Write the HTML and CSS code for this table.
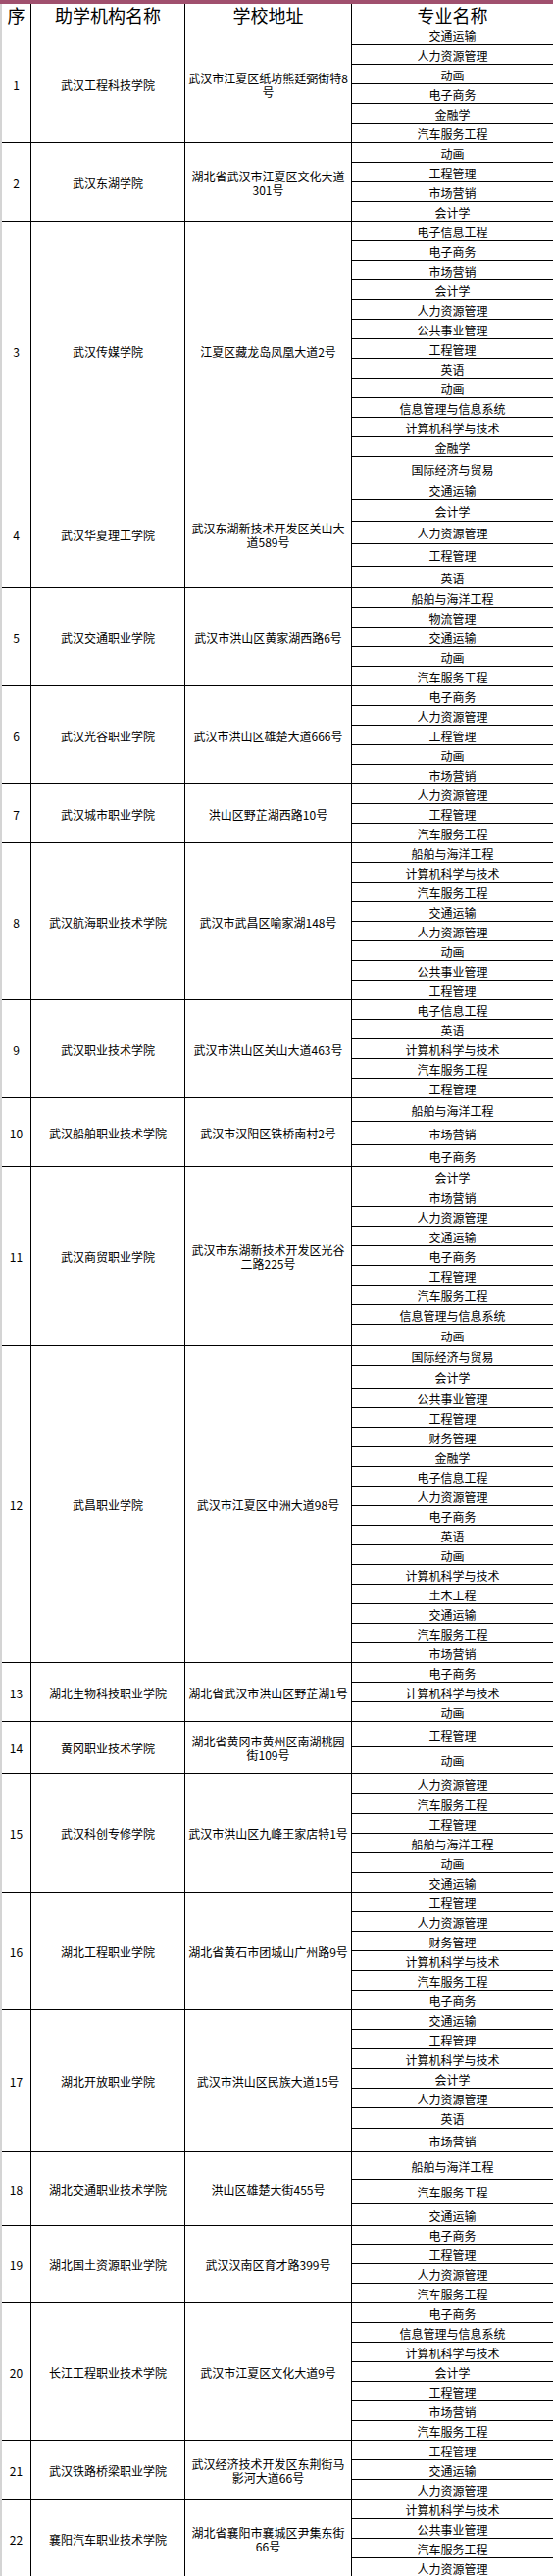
FILE: index.html
```html
<!DOCTYPE html>
<html lang="zh-CN">
<head>
<meta charset="utf-8">
<title>助学机构专业一览</title>
<link rel="stylesheet" href="styles.css">
</head>
<body>
<div class="band"></div>
<table class="sheet">
<thead>
<tr class="hd"><th class="c-seq">序</th><th class="c-name">助学机构名称</th><th class="c-addr">学校地址</th><th class="c-spec">专业名称</th></tr>
</thead>
<tbody>
<tr><td class="c-seq" rowspan="6">1</td><td class="c-name" rowspan="6">武汉工程科技学院</td><td class="c-addr" rowspan="6">武汉市江夏区纸坊熊廷弼街特8号</td><td class="c-spec">交通运输</td></tr>
<tr><td class="c-spec">人力资源管理</td></tr>
<tr><td class="c-spec">动画</td></tr>
<tr><td class="c-spec">电子商务</td></tr>
<tr><td class="c-spec">金融学</td></tr>
<tr><td class="c-spec">汽车服务工程</td></tr>

<tr><td class="c-seq" rowspan="4">2</td><td class="c-name" rowspan="4">武汉东湖学院</td><td class="c-addr" rowspan="4">湖北省武汉市江夏区文化大道301号</td><td class="c-spec">动画</td></tr>
<tr><td class="c-spec">工程管理</td></tr>
<tr><td class="c-spec">市场营销</td></tr>
<tr><td class="c-spec">会计学</td></tr>

<tr><td class="c-seq" rowspan="13">3</td><td class="c-name" rowspan="13">武汉传媒学院</td><td class="c-addr" rowspan="13">江夏区藏龙岛凤凰大道2号</td><td class="c-spec">电子信息工程</td></tr>
<tr><td class="c-spec">电子商务</td></tr>
<tr><td class="c-spec">市场营销</td></tr>
<tr><td class="c-spec">会计学</td></tr>
<tr><td class="c-spec">人力资源管理</td></tr>
<tr><td class="c-spec">公共事业管理</td></tr>
<tr><td class="c-spec">工程管理</td></tr>
<tr><td class="c-spec">英语</td></tr>
<tr><td class="c-spec">动画</td></tr>
<tr><td class="c-spec">信息管理与信息系统</td></tr>
<tr><td class="c-spec">计算机科学与技术</td></tr>
<tr><td class="c-spec">金融学</td></tr>
<tr class="h24"><td class="c-spec">国际经济与贸易</td></tr>

<tr><td class="c-seq" rowspan="5">4</td><td class="c-name" rowspan="5">武汉华夏理工学院</td><td class="c-addr" rowspan="5">武汉东湖新技术开发区关山大道589号</td><td class="c-spec">交通运输</td></tr>
<tr class="h22"><td class="c-spec">会计学</td></tr>
<tr class="h23"><td class="c-spec">人力资源管理</td></tr>
<tr class="h23"><td class="c-spec">工程管理</td></tr>
<tr class="h22"><td class="c-spec">英语</td></tr>

<tr><td class="c-seq" rowspan="5">5</td><td class="c-name" rowspan="5">武汉交通职业学院</td><td class="c-addr" rowspan="5">武汉市洪山区黄家湖西路6号</td><td class="c-spec">船舶与海洋工程</td></tr>
<tr><td class="c-spec">物流管理</td></tr>
<tr><td class="c-spec">交通运输</td></tr>
<tr><td class="c-spec">动画</td></tr>
<tr><td class="c-spec">汽车服务工程</td></tr>

<tr><td class="c-seq" rowspan="5">6</td><td class="c-name" rowspan="5">武汉光谷职业学院</td><td class="c-addr" rowspan="5">武汉市洪山区雄楚大道666号</td><td class="c-spec">电子商务</td></tr>
<tr><td class="c-spec">人力资源管理</td></tr>
<tr><td class="c-spec">工程管理</td></tr>
<tr><td class="c-spec">动画</td></tr>
<tr><td class="c-spec">市场营销</td></tr>

<tr><td class="c-seq" rowspan="3">7</td><td class="c-name" rowspan="3">武汉城市职业学院</td><td class="c-addr" rowspan="3">洪山区野芷湖西路10号</td><td class="c-spec">人力资源管理</td></tr>
<tr><td class="c-spec">工程管理</td></tr>
<tr><td class="c-spec">汽车服务工程</td></tr>

<tr><td class="c-seq" rowspan="8">8</td><td class="c-name" rowspan="8">武汉航海职业技术学院</td><td class="c-addr" rowspan="8">武汉市武昌区喻家湖148号</td><td class="c-spec">船舶与海洋工程</td></tr>
<tr><td class="c-spec">计算机科学与技术</td></tr>
<tr><td class="c-spec">汽车服务工程</td></tr>
<tr><td class="c-spec">交通运输</td></tr>
<tr><td class="c-spec">人力资源管理</td></tr>
<tr><td class="c-spec">动画</td></tr>
<tr><td class="c-spec">公共事业管理</td></tr>
<tr><td class="c-spec">工程管理</td></tr>

<tr><td class="c-seq" rowspan="5">9</td><td class="c-name" rowspan="5">武汉职业技术学院</td><td class="c-addr" rowspan="5">武汉市洪山区关山大道463号</td><td class="c-spec">电子信息工程</td></tr>
<tr><td class="c-spec">英语</td></tr>
<tr><td class="c-spec">计算机科学与技术</td></tr>
<tr><td class="c-spec">汽车服务工程</td></tr>
<tr><td class="c-spec">工程管理</td></tr>

<tr class="h24"><td class="c-seq" rowspan="3">10</td><td class="c-name" rowspan="3">武汉船舶职业技术学院</td><td class="c-addr" rowspan="3">武汉市汉阳区铁桥南村2号</td><td class="c-spec">船舶与海洋工程</td></tr>
<tr class="h24"><td class="c-spec">市场营销</td></tr>
<tr class="h22"><td class="c-spec">电子商务</td></tr>

<tr class="h21"><td class="c-seq" rowspan="9">11</td><td class="c-name" rowspan="9">武汉商贸职业学院</td><td class="c-addr" rowspan="9">武汉市东湖新技术开发区光谷二路225号</td><td class="c-spec">会计学</td></tr>
<tr><td class="c-spec">市场营销</td></tr>
<tr><td class="c-spec">人力资源管理</td></tr>
<tr><td class="c-spec">交通运输</td></tr>
<tr><td class="c-spec">电子商务</td></tr>
<tr><td class="c-spec">工程管理</td></tr>
<tr><td class="c-spec">汽车服务工程</td></tr>
<tr><td class="c-spec">信息管理与信息系统</td></tr>
<tr class="h22"><td class="c-spec">动画</td></tr>

<tr><td class="c-seq" rowspan="16">12</td><td class="c-name" rowspan="16">武昌职业学院</td><td class="c-addr" rowspan="16">武汉市江夏区中洲大道98号</td><td class="c-spec">国际经济与贸易</td></tr>
<tr class="h23"><td class="c-spec">会计学</td></tr>
<tr><td class="c-spec">公共事业管理</td></tr>
<tr><td class="c-spec">工程管理</td></tr>
<tr><td class="c-spec">财务管理</td></tr>
<tr><td class="c-spec">金融学</td></tr>
<tr><td class="c-spec">电子信息工程</td></tr>
<tr><td class="c-spec">人力资源管理</td></tr>
<tr><td class="c-spec">电子商务</td></tr>
<tr><td class="c-spec">英语</td></tr>
<tr><td class="c-spec">动画</td></tr>
<tr><td class="c-spec">计算机科学与技术</td></tr>
<tr><td class="c-spec">土木工程</td></tr>
<tr><td class="c-spec">交通运输</td></tr>
<tr><td class="c-spec">汽车服务工程</td></tr>
<tr><td class="c-spec">市场营销</td></tr>

<tr><td class="c-seq" rowspan="3">13</td><td class="c-name" rowspan="3">湖北生物科技职业学院</td><td class="c-addr" rowspan="3">湖北省武汉市洪山区野芷湖1号</td><td class="c-spec">电子商务</td></tr>
<tr><td class="c-spec">计算机科学与技术</td></tr>
<tr><td class="c-spec">动画</td></tr>

<tr class="h26"><td class="c-seq" rowspan="2">14</td><td class="c-name" rowspan="2">黄冈职业技术学院</td><td class="c-addr" rowspan="2">湖北省黄冈市黄州区南湖桃园街109号</td><td class="c-spec">工程管理</td></tr>
<tr class="h27"><td class="c-spec">动画</td></tr>

<tr class="h21"><td class="c-seq" rowspan="6">15</td><td class="c-name" rowspan="6">武汉科创专修学院</td><td class="c-addr" rowspan="6">武汉市洪山区九峰王家店特1号</td><td class="c-spec">人力资源管理</td></tr>
<tr><td class="c-spec">汽车服务工程</td></tr>
<tr><td class="c-spec">工程管理</td></tr>
<tr><td class="c-spec">船舶与海洋工程</td></tr>
<tr><td class="c-spec">动画</td></tr>
<tr><td class="c-spec">交通运输</td></tr>

<tr><td class="c-seq" rowspan="6">16</td><td class="c-name" rowspan="6">湖北工程职业学院</td><td class="c-addr" rowspan="6">湖北省黄石市团城山广州路9号</td><td class="c-spec">工程管理</td></tr>
<tr><td class="c-spec">人力资源管理</td></tr>
<tr><td class="c-spec">财务管理</td></tr>
<tr><td class="c-spec">计算机科学与技术</td></tr>
<tr><td class="c-spec">汽车服务工程</td></tr>
<tr><td class="c-spec">电子商务</td></tr>

<tr><td class="c-seq" rowspan="7">17</td><td class="c-name" rowspan="7">湖北开放职业学院</td><td class="c-addr" rowspan="7">武汉市洪山区民族大道15号</td><td class="c-spec">交通运输</td></tr>
<tr><td class="c-spec">工程管理</td></tr>
<tr><td class="c-spec">计算机科学与技术</td></tr>
<tr><td class="c-spec">会计学</td></tr>
<tr><td class="c-spec">人力资源管理</td></tr>
<tr class="h21"><td class="c-spec">英语</td></tr>
<tr class="h24"><td class="c-spec">市场营销</td></tr>

<tr class="h28"><td class="c-seq" rowspan="3">18</td><td class="c-name" rowspan="3">湖北交通职业技术学院</td><td class="c-addr" rowspan="3">洪山区雄楚大街455号</td><td class="c-spec">船舶与海洋工程</td></tr>
<tr class="h25"><td class="c-spec">汽车服务工程</td></tr>
<tr class="h22"><td class="c-spec">交通运输</td></tr>

<tr class="h19"><td class="c-seq" rowspan="4">19</td><td class="c-name" rowspan="4">湖北国土资源职业学院</td><td class="c-addr" rowspan="4">武汉汉南区育才路399号</td><td class="c-spec">电子商务</td></tr>
<tr><td class="c-spec">工程管理</td></tr>
<tr><td class="c-spec">人力资源管理</td></tr>
<tr><td class="c-spec">汽车服务工程</td></tr>

<tr><td class="c-seq" rowspan="7">20</td><td class="c-name" rowspan="7">长江工程职业技术学院</td><td class="c-addr" rowspan="7">武汉市江夏区文化大道9号</td><td class="c-spec">电子商务</td></tr>
<tr><td class="c-spec">信息管理与信息系统</td></tr>
<tr><td class="c-spec">计算机科学与技术</td></tr>
<tr><td class="c-spec">会计学</td></tr>
<tr><td class="c-spec">工程管理</td></tr>
<tr><td class="c-spec">市场营销</td></tr>
<tr><td class="c-spec">汽车服务工程</td></tr>

<tr><td class="c-seq" rowspan="3">21</td><td class="c-name" rowspan="3">武汉铁路桥梁职业学院</td><td class="c-addr" rowspan="3">武汉经济技术开发区东荆街马影河大道66号</td><td class="c-spec">工程管理</td></tr>
<tr><td class="c-spec">交通运输</td></tr>
<tr><td class="c-spec">人力资源管理</td></tr>

<tr><td class="c-seq" rowspan="4">22</td><td class="c-name" rowspan="4">襄阳汽车职业技术学院</td><td class="c-addr" rowspan="4">湖北省襄阳市襄城区尹集东街66号</td><td class="c-spec">计算机科学与技术</td></tr>
<tr><td class="c-spec">公共事业管理</td></tr>
<tr><td class="c-spec">汽车服务工程</td></tr>
<tr><td class="c-spec">人力资源管理</td></tr>
</tbody>
</table>
</body>
</html>
```

FILE: styles.css
```css
html, body {
  margin: 0;
  padding: 0;
  background: #ffffff;
}

body {
  font-family: "Noto Sans CJK SC", "Noto Sans", sans-serif;
  color: #000000;
  width: 564px;
}

.band {
  height: 4px;
  background: #a0506e;
}

.sheet {
  width: 564px;
  table-layout: fixed;
  border-collapse: separate;
  border-spacing: 0;
  border-left: 2px solid #d4d4d4;
}

.sheet th,
.sheet td {
  box-sizing: border-box;
  padding: 0;
  border-bottom: 1px solid #000000;
  text-align: center;
  vertical-align: middle;
  font-weight: normal;
}

.sheet th {
  font-size: 18px;
  line-height: 20px;
  padding-top: 1px;
}

.sheet td {
  font-size: 12px;
  line-height: 14px;
  padding-top: 2px;
}

.sheet td.c-addr {
  padding-left: 2px;
  padding-right: 2px;
}

.c-seq,
.c-name,
.c-addr {
  border-right: 1px solid #000000;
}

.sheet th.c-seq { width: 30px; }
.sheet th.c-name { width: 157px; }
.sheet th.c-addr { width: 170px; }
.sheet th.c-spec { width: 205px; }

.sheet tr { height: 20px; }
.sheet tr.hd { height: 21px; }
.sheet tr.h19 { height: 19px; }
.sheet tr.h21 { height: 21px; }
.sheet tr.h22 { height: 22px; }
.sheet tr.h23 { height: 23px; }
.sheet tr.h24 { height: 24px; }
.sheet tr.h25 { height: 25px; }
.sheet tr.h26 { height: 26px; }
.sheet tr.h27 { height: 27px; }
.sheet tr.h28 { height: 28px; }
```
